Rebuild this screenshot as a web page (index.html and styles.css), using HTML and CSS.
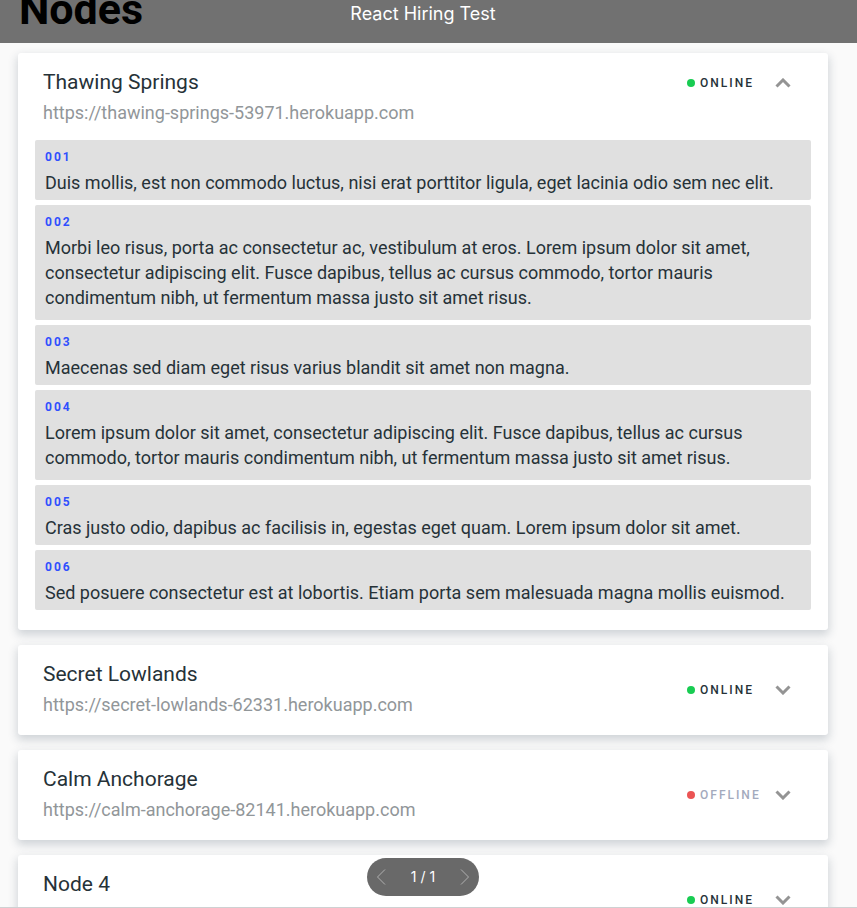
FILE: index.html
```html
<!DOCTYPE html>
<html lang="en">
<head>
<meta charset="utf-8">
<meta name="viewport" content="width=device-width, initial-scale=1">
<title>React Hiring Test</title>
<link rel="stylesheet" href="styles.css">
</head>
<body>
<div class="viewer">
  <header class="topbar">
    <h1 class="page-title">Nodes</h1>
    <p class="document-title">React Hiring Test</p>
  </header>
  <main class="nodes">
    <section class="card card-open">
      <div class="summary">
        <div class="identity">
          <h2 class="name">Thawing Springs</h2>
          <p class="url">https://thawing-springs-53971.herokuapp.com</p>
        </div>
        <p class="status online">Online</p>
        <button class="toggle" type="button" aria-label="Collapse Thawing Springs" aria-expanded="true"><svg class="chevron" viewBox="0 0 16 10"><path d="M1.500 8.500 8 2l6.500 6.500"/></svg></button>
      </div>
      <ul class="blocks">
        <li class="block"><h3 class="number">001</h3><p class="text">Duis mollis, est non commodo luctus, nisi erat porttitor ligula, eget lacinia odio sem nec elit.</p></li>
        <li class="block block-long"><h3 class="number">002</h3><p class="text">Morbi leo risus, porta ac consectetur ac, vestibulum at eros. Lorem ipsum dolor sit amet, consectetur adipiscing elit. Fusce dapibus, tellus ac cursus commodo, tortor mauris condimentum nibh, ut fermentum massa justo sit amet risus.</p></li>
        <li class="block"><h3 class="number">003</h3><p class="text">Maecenas sed diam eget risus varius blandit sit amet non magna.</p></li>
        <li class="block block-long"><h3 class="number">004</h3><p class="text">Lorem ipsum dolor sit amet, consectetur adipiscing elit. Fusce dapibus, tellus ac cursus commodo, tortor mauris condimentum nibh, ut fermentum massa justo sit amet risus.</p></li>
        <li class="block"><h3 class="number">005</h3><p class="text">Cras justo odio, dapibus ac facilisis in, egestas eget quam. Lorem ipsum dolor sit amet.</p></li>
        <li class="block"><h3 class="number">006</h3><p class="text">Sed posuere consectetur est at lobortis. Etiam porta sem malesuada magna mollis euismod.</p></li>
      </ul>
    </section>
    <section class="card">
      <div class="summary">
        <div class="identity">
          <h2 class="name">Secret Lowlands</h2>
          <p class="url">https://secret-lowlands-62331.herokuapp.com</p>
        </div>
        <p class="status online">Online</p>
        <button class="toggle" type="button" aria-label="Expand Secret Lowlands" aria-expanded="false"><svg class="chevron" viewBox="0 0 16 10"><path d="M1.500 1.500 8 8l6.500-6.500"/></svg></button>
      </div>
    </section>
    <section class="card">
      <div class="summary">
        <div class="identity">
          <h2 class="name">Calm Anchorage</h2>
          <p class="url">https://calm-anchorage-82141.herokuapp.com</p>
        </div>
        <p class="status offline">Offline</p>
        <button class="toggle" type="button" aria-label="Expand Calm Anchorage" aria-expanded="false"><svg class="chevron" viewBox="0 0 16 10"><path d="M1.500 1.500 8 8l6.500-6.500"/></svg></button>
      </div>
    </section>
    <section class="card">
      <div class="summary">
        <div class="identity">
          <h2 class="name">Node 4</h2>
        </div>
        <p class="status online">Online</p>
        <button class="toggle" type="button" aria-label="Expand Node 4" aria-expanded="false"><svg class="chevron" viewBox="0 0 16 10"><path d="M1.500 1.500 8 8l6.500-6.500"/></svg></button>
      </div>
    </section>
  </main>
  <nav class="pager" aria-label="Pages">
    <button class="page-step" type="button" aria-label="Previous page"><svg class="arrow" viewBox="0 0 10 16"><path d="M9 .500 1.500 8 9 15.500"/></svg></button>
    <span class="page-count">1 / 1</span>
    <button class="page-step" type="button" aria-label="Next page"><svg class="arrow" viewBox="0 0 10 16"><path d="M1 .500 8.500 8 1 15.500"/></svg></button>
  </nav>
</div>
</body>
</html>
```
FILE: styles.css
```css
* {
  box-sizing: border-box;
}

body,
h1,
h2,
h3,
p,
ul {
  margin: 0;
  padding: 0;
}

body {
  background: #fafafa;
  color: #263238;
  font-family: Roboto, "Liberation Sans", sans-serif;
}

button {
  padding: 0;
  border: 0;
  background: none;
  cursor: pointer;
}

.viewer {
  position: relative;
  height: 100vh;
  overflow: hidden;
  border-bottom: 1px solid #ced1d2;
}

.topbar {
  display: grid;
  grid-template-columns: 1fr auto 1fr;
  grid-template-rows: 43px;
  align-items: end;
  padding: 0 30px 0 19px;
  background: #717171;
}

.page-title {
  padding-bottom: 12px;
  color: #000;
  font-size: 43px;
  font-weight: 700;
  line-height: 44px;
}

.document-title {
  padding-bottom: 19px;
  color: #fff;
  font-family: Inter, sans-serif;
  font-size: 18px;
  line-height: 20px;
}

.nodes {
  display: flex;
  flex-direction: column;
  gap: 15px;
  padding: 10px 29px 0 18px;
}

.card {
  border-radius: 3px;
  background: #fff;
  box-shadow: 0 4px 10px 1px rgba(38, 60, 80, 0.2);
}

.card-open {
  padding-bottom: 20px;
}

.summary {
  display: flex;
  align-items: center;
  min-height: 90px;
  padding: 0 37px 0 25px;
}

.card-open .summary {
  align-items: flex-start;
  min-height: 87px;
}

.identity {
  flex: 1;
  align-self: flex-start;
  padding-top: 14px;
}

.name {
  font-size: 21px;
  font-weight: 400;
  line-height: 31px;
}

.url {
  color: #919699;
  font-size: 18px;
  line-height: 30px;
}

.status {
  display: flex;
  align-items: center;
  gap: 5px;
  width: 88px;
  font-size: 12px;
  font-weight: 500;
  letter-spacing: 2px;
  line-height: 20px;
  text-transform: uppercase;
}

.status::before {
  content: "";
  width: 8px;
  height: 8px;
  border-radius: 50%;
  background: currentColor;
}

.online::before {
  background: #18cc52;
}

.offline {
  color: #a3aabd;
}

.offline::before {
  background: #eb5454;
}

.toggle {
  display: grid;
  place-items: center;
  width: 16px;
  height: 20px;
}

.card-open .status,
.card-open .toggle {
  margin-top: 20px;
}

.chevron {
  width: 16px;
  height: 10px;
  fill: none;
  stroke: #949494;
  stroke-width: 3;
}

.blocks {
  display: flex;
  flex-direction: column;
  gap: 5px;
  padding: 0 17px;
  list-style: none;
}

.block {
  padding: 5px 10px;
  border-radius: 2px;
  background: #e0e0e0;
}

.block-long {
  padding-bottom: 10px;
}

.number {
  color: #304ffe;
  font-size: 12px;
  font-weight: 700;
  letter-spacing: 2px;
  line-height: 25px;
}

.text {
  font-size: 18px;
  line-height: 25px;
}

.pager {
  position: absolute;
  bottom: 11px;
  left: 367px;
  display: flex;
  align-items: center;
  justify-content: space-between;
  width: 112px;
  height: 38px;
  padding: 0 9px;
  border-radius: 19px;
  background: #696969;
  color: #fff;
}

.page-step {
  display: grid;
  place-items: center;
}

.arrow {
  width: 10px;
  height: 16px;
  fill: none;
  stroke: #b0b0b0;
  stroke-width: 1;
}

.page-count {
  font-family: Inter, sans-serif;
  font-size: 14px;
  line-height: 20px;
}
```
